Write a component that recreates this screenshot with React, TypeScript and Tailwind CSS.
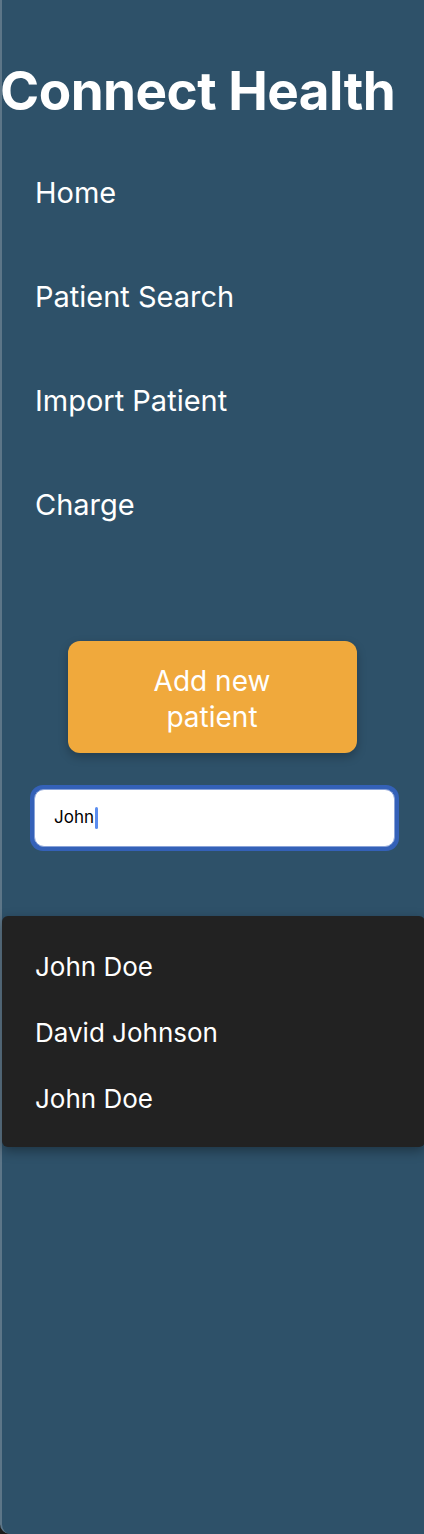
const navItems = ['Home', 'Patient Search', 'Import Patient', 'Charge']
const results = ['John Doe', 'David Johnson', 'John Doe']

export default function App() {
  return (
    <div className="h-[1534px] w-[424px] overflow-hidden bg-[#1c1c1c] font-['Inter',sans-serif]">
      <aside className="relative flex h-full flex-col rounded-bl-[10px] border-l-2 border-[#5d7688] bg-[#2e5169]">
        <h1 className="mt-[60px] -ml-[2px] text-[53px] leading-[62px] font-bold tracking-[-0.01em] whitespace-nowrap text-white">
          Connect Health
        </h1>
        <nav className="mt-[45px] flex flex-col">
          {navItems.map((item) => (
            <a key={item} className="block h-[104px] pl-[33px] pt-[6px] text-[29px] leading-[40px] text-white">
              {item}
            </a>
          ))}
        </nav>
        <div className="mt-[58px] flex justify-center pr-[2px]">
          <button className="h-[112px] w-[289px] rounded-[12px] bg-[#f0a93c] px-[46px] pt-[3px] text-[28px] leading-[36px] text-white shadow-[0_4px_10px_rgba(0,0,0,0.25)]">
            Add new patient
          </button>
        </div>
        <div className="mt-[32px] ml-[28px] w-[369px]">
          <div className="flex h-[66px] items-center rounded-[13px] bg-[#3461b8] p-[4px]">
            <div className="flex h-full w-full items-center rounded-[10px] border border-[#8aa3d8] bg-white pl-[19px] text-[17px] text-black">
              <span>John</span>
              <span className="ml-[1px] h-[22px] w-[3px] rounded-full bg-[#5b8def]" />
            </div>
          </div>
        </div>
        <div className="mt-[65px] -mr-px flex flex-col rounded-[6px] bg-[#222222] pt-[30px] pb-[3px] pl-[33px] shadow-[0_4px_12px_rgba(0,0,0,0.35)]">
          {results.map((name, i) => (
            <div key={i} className="h-[66px] text-[26px] leading-[42px] text-white">
              {name}
            </div>
          ))}
        </div>
      </aside>
    </div>
  )
}
